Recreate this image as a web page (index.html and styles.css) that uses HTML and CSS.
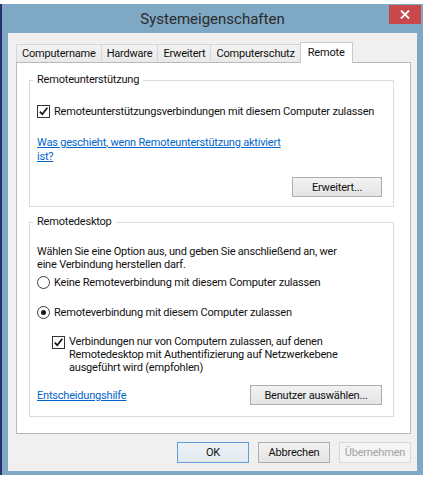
FILE: index.html
```html
<!DOCTYPE html>
<html lang="de">
<head>
<title>Systemeigenschaften</title>
<meta charset="utf-8">
<meta name="viewport" content="width=device-width, initial-scale=1">
<link rel="stylesheet" href="styles.css">
</head>
<body>

<div class="window">
  <header class="titlebar">
    <span></span>
    <h1 class="title">Systemeigenschaften</h1>
    <button class="close" title="Schließen">
      <svg width="10" height="9" viewBox="0 0 10 9"><path d="M1 0.5 L9 8.5 M9 0.5 L1 8.5" stroke="#fff" stroke-width="1.8"/></svg>
    </button>
  </header>

  <div class="client">
    <ul class="tabs">
      <li class="tab">Computername</li>
      <li class="tab">Hardware</li>
      <li class="tab">Erweitert</li>
      <li class="tab">Computerschutz</li>
      <li class="tab active">Remote</li>
    </ul>

    <div class="panel">
      <fieldset class="group">
        <legend>Remoteunterstützung</legend>
        <label class="option first">
          <span class="checkbox"><svg width="11" height="11" viewBox="0 0 11 11"><path d="M1.8 5.6 L4.3 8.3 L9.3 1.8" fill="none" stroke="#111" stroke-width="1.7"/></svg></span>
          Remoteunterstützungsverbindungen mit diesem Computer zulassen
        </label>
        <a class="link help" href="#">Was geschieht, wenn Remoteunterstützung aktiviert<br>ist?</a>
        <div class="group-actions">
          <button class="btn btn-advanced">Erweitert...</button>
        </div>
      </fieldset>

      <fieldset class="group second">
        <legend>Remotedesktop</legend>
        <p class="intro">Wählen Sie eine Option aus, und geben Sie anschließend an, wer<br>eine Verbindung herstellen darf.</p>
        <label class="option radio-row">
          <span class="radio"></span>
          Keine Remoteverbindung mit diesem Computer zulassen
        </label>
        <label class="option radio-row second-radio">
          <span class="radio checked"></span>
          Remoteverbindung mit diesem Computer zulassen
        </label>
        <label class="option nla">
          <span class="checkbox"><svg width="11" height="11" viewBox="0 0 11 11"><path d="M1.8 5.6 L4.3 8.3 L9.3 1.8" fill="none" stroke="#111" stroke-width="1.7"/></svg></span>
          <span>Verbindungen nur von Computern zulassen, auf denen<br>Remotedesktop mit Authentifizierung auf Netzwerkebene<br>ausgeführt wird (empfohlen)</span>
        </label>
        <div class="group-actions split">
          <a class="link" href="#">Entscheidungshilfe</a>
          <button class="btn btn-users">Benutzer auswählen...</button>
        </div>
      </fieldset>
    </div>

    <footer class="dialog-buttons">
      <button class="btn btn-dialog default">OK</button>
      <button class="btn btn-dialog">Abbrechen</button>
      <button class="btn btn-dialog" disabled>Übernehmen</button>
    </footer>
  </div>
</div>

</body>
</html>
```

FILE: styles.css
```css
* {
  box-sizing: border-box;
}

body {
  margin: 0;
  padding-top: 4px;
  background: #fff;
  font-family: Roboto, "Liberation Sans", Arial, sans-serif;
  font-size: 11px;
  letter-spacing: -0.2px;
  color: #111;
}

/* Window frame */
.window {
  width: 423px;
  border-left: 2px solid #2c2f6e;
  background: #7fa8c4;
  padding: 0 6px 4px 6px;
}

.titlebar {
  display: grid;
  grid-template-columns: 1fr auto 1fr;
  height: 29px;
}

.title {
  margin: 0;
  padding-top: 2px;
  font-size: 15px;
  font-weight: normal;
  letter-spacing: 0;
  line-height: 27px;
  color: #2b2b2b;
}

.close {
  justify-self: end;
  width: 32px;
  height: 19px;
  margin: 1px -4px 0 0;
  padding: 0;
  border: none;
  background: #c8484b;
  display: flex;
  align-items: center;
  justify-content: center;
}

.client {
  background: #f0f0f0;
  padding: 9px 6px 8px 8px;
}

/* Tabs */
.tabs {
  display: flex;
  align-items: flex-end;
  list-style: none;
  margin: 0;
  padding: 0;
  height: 20px;
}

.tab {
  height: 18px;
  line-height: 17px;
  padding: 0 5px;
  border: 1px solid #d6d6d6;
  border-bottom: none;
  margin-right: -1px;
  background: linear-gradient(#f2f2f2, #e9e9e9);
}

.tab.active {
  position: relative;
  z-index: 1;
  height: 21px;
  line-height: 19px;
  margin-bottom: -1px;
  padding: 0 7px;
  background: #fff;
  border-color: #c9c9c9;
}

.panel {
  background: #fff;
  border: 1px solid #b9b9b9;
  padding: 10px 0 16px 0;
}

/* Group boxes */
.group {
  margin: 0 16px 0 12px;
  border: 1px solid #dcdcdc;
  padding: 0 11px 9px 7px;
}

.group.second {
  margin-top: 8px;
  padding-bottom: 11px;
}

.group legend {
  padding: 0 4px;
  margin-left: -4px;
  line-height: 14px;
}

.option {
  display: flex;
  align-items: center;
  gap: 4px;
  line-height: 15px;
  white-space: nowrap;
}

.option.first {
  margin-top: 17px;
}

.checkbox {
  width: 13px;
  height: 13px;
  flex: none;
  border: 1px solid #333;
  background: #fff;
  display: flex;
  align-items: center;
  justify-content: center;
}

.radio {
  width: 13px;
  height: 13px;
  flex: none;
  border: 1px solid #3a3a3a;
  border-radius: 50%;
  background: #fff;
  display: flex;
  align-items: center;
  justify-content: center;
}

.radio.checked:after {
  content: "";
  width: 5px;
  height: 5px;
  border-radius: 50%;
  background: #1a1a1a;
}

.link {
  color: #0066cc;
  text-decoration: underline;
}

.help {
  display: block;
  margin-top: 17px;
  line-height: 14px;
}

.intro {
  margin: 16px 0 0 0;
  line-height: 13px;
  white-space: nowrap;
}

.radio-row {
  margin-top: 4px;
}

.radio-row.second-radio {
  margin-top: 15px;
}

.nla {
  align-items: flex-start;
  margin: 15px 0 0 15px;
  line-height: 13px;
}

.nla .checkbox {
  margin-top: 1px;
}

.group-actions {
  display: flex;
  justify-content: flex-end;
  align-items: center;
  margin-top: 13px;
}

.group-actions.split {
  justify-content: space-between;
  margin-top: 11px;
}

/* Buttons */
.btn {
  height: 20px;
  padding: 0;
  font-family: inherit;
  font-size: 11px;
  letter-spacing: -0.2px;
  color: #111;
  background: linear-gradient(#f2f2f2, #e4e4e4);
  border: 1px solid #adadad;
}

.btn-advanced {
  width: 90px;
}

.btn-users {
  width: 132px;
}

.dialog-buttons {
  display: flex;
  justify-content: flex-end;
  gap: 9px;
  margin-top: 8px;
}

.btn-dialog {
  width: 72px;
  height: 21px;
}

.btn-dialog.default {
  border-color: #5f9ddb;
  background: linear-gradient(#eef2f7, #e2e9f1);
}

.btn-dialog:disabled {
  color: #a3a3a3;
  background: #f4f4f4;
  border-color: #d9d9d9;
}
```
